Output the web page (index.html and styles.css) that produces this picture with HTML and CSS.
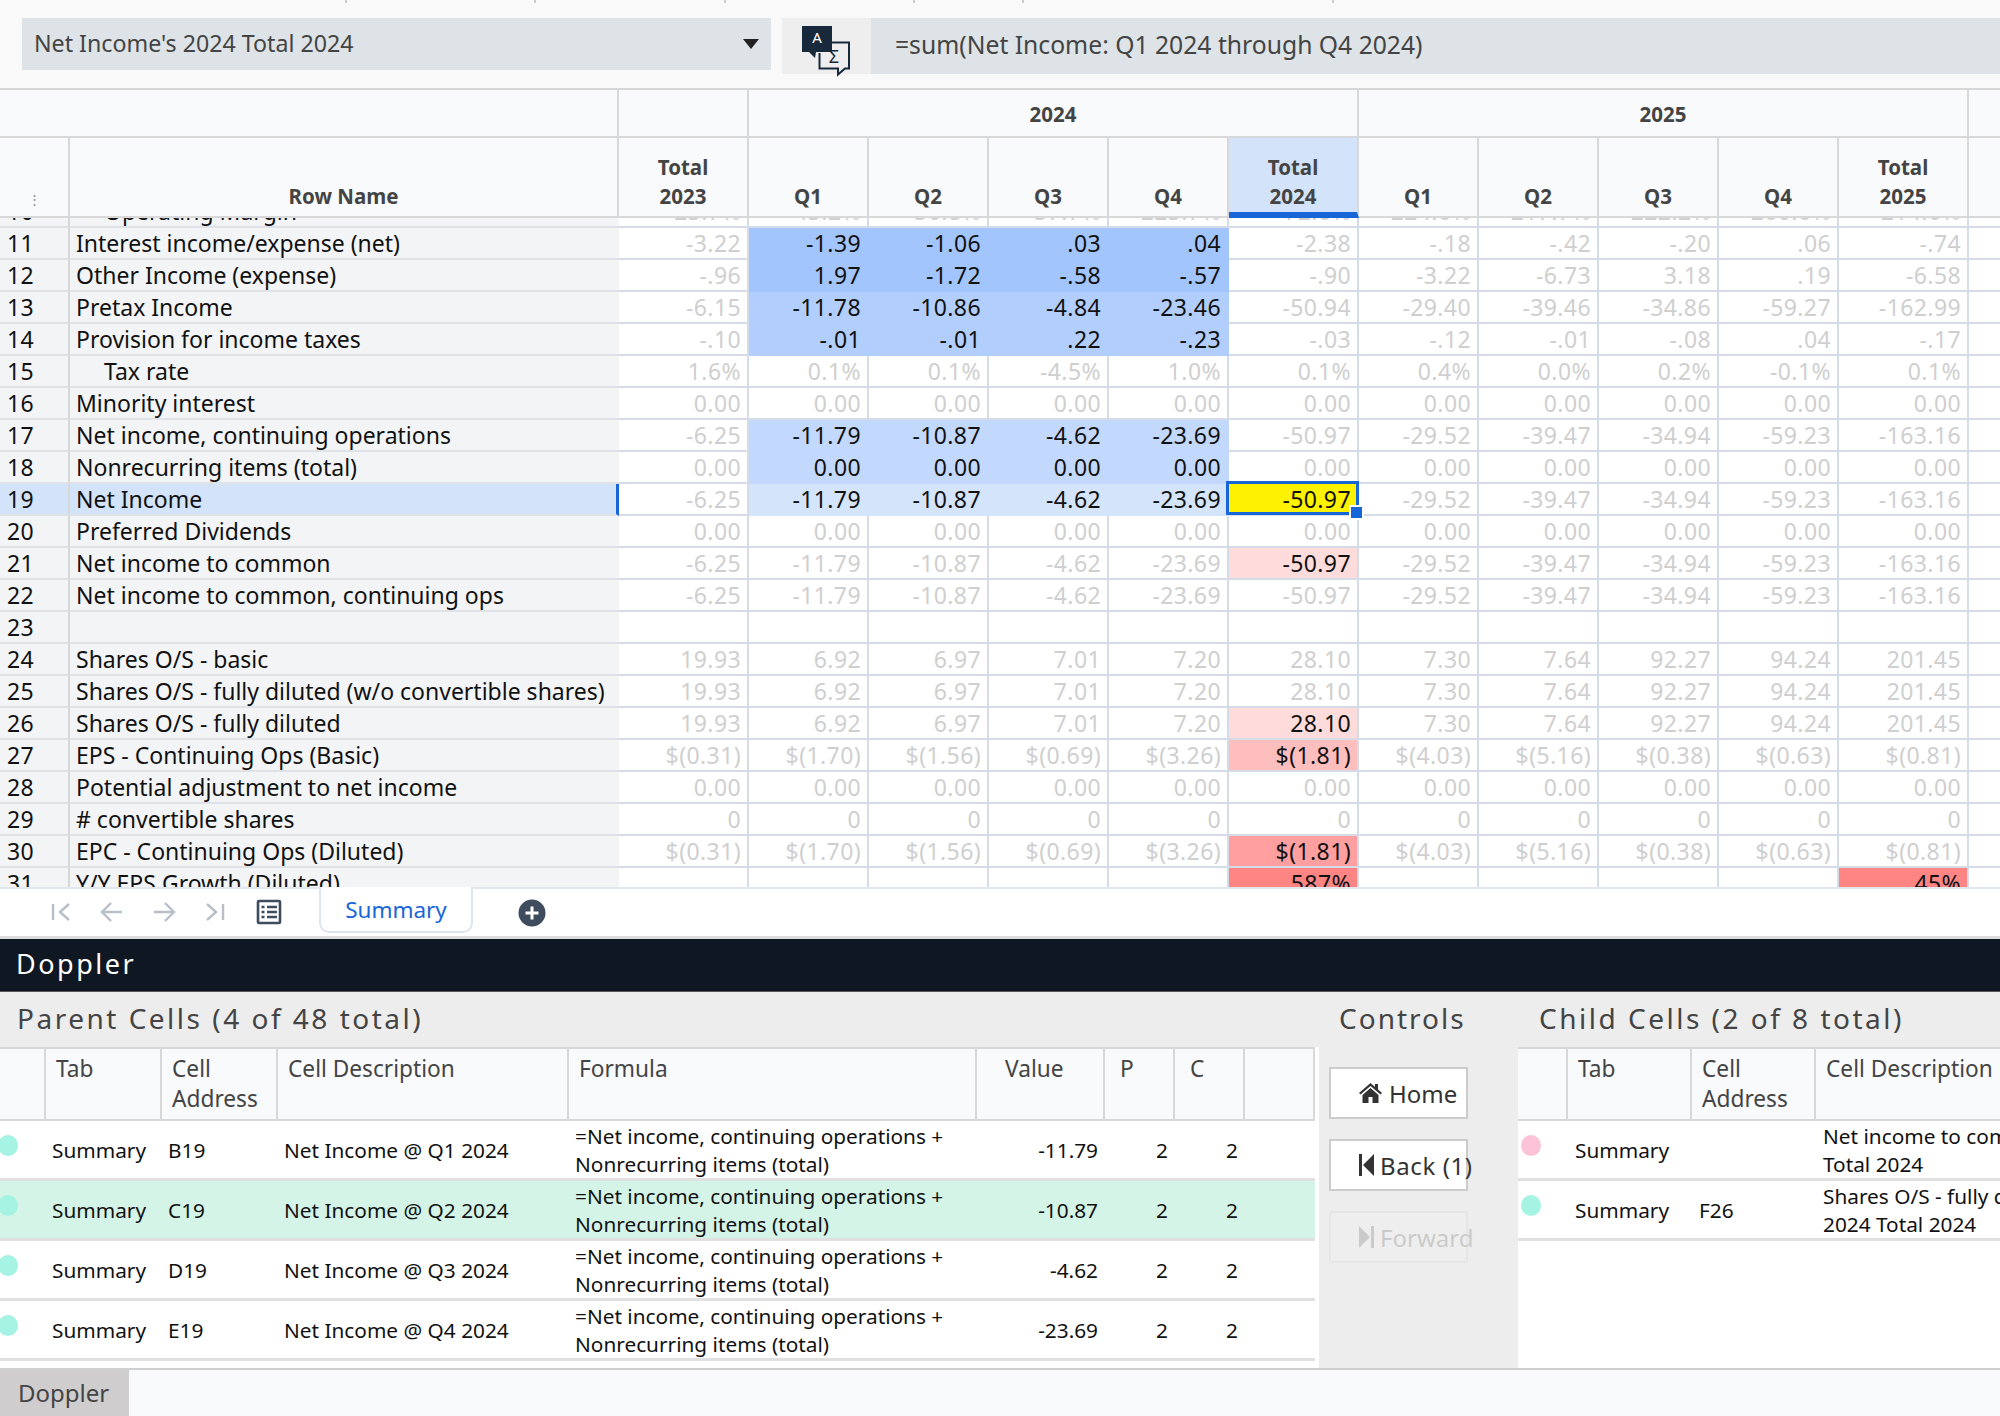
FILE: index.html
```html
<!DOCTYPE html>
<html>
<head>
    <title>Doppler</title>
    <link rel="stylesheet" href="styles.css">
</head>
<body>
    <div class="ruler"><span></span><span></span><span></span><span></span><span></span><span></span><span></span></div>

    <div class="toolbar">
        <div class="cell-select">Net Income's 2024 Total 2024<i class="caret"></i></div>
        <div class="formula-toggle">
            <svg width="52" height="52" viewBox="0 0 52 52">
                <path d="M1 1h30v26H15l-1 6-6-6H1z" fill="#17293a"/>
                <text x="16" y="18" class="icon-a">A</text>
                <path d="M31 17.500h17v26h-4l-7 6v-6H18.500V28" fill="none" stroke="#17293a" stroke-width="2"/>
                <text x="33" y="38" class="icon-sigma">Σ</text>
            </svg>
        </div>
        <div class="formula-bar">=sum(Net Income: Q1 2024 through Q4 2024)</div>
    </div>

    <table class="sheet sheet-head">
        <colgroup><col class="c-num"><col class="c-name"><col class="c-total"><col class="c-q"><col class="c-q"><col class="c-q"><col class="c-q"><col class="c-total"><col class="c-q"><col class="c-q"><col class="c-q"><col class="c-q"><col class="c-total"><col class="c-end"></colgroup>
        <tr class="years">
            <th colspan="2"></th><th></th><th colspan="5">2024</th><th colspan="5">2025</th><th></th>
        </tr>
        <tr class="labels">
            <th><span class="dots">⋮</span></th><th class="center">Row Name</th><th>Total<br>2023</th><th>Q1</th><th>Q2</th><th>Q3</th><th>Q4</th><th class="col-on">Total<br>2024</th><th>Q1</th><th>Q2</th><th>Q3</th><th>Q4</th><th>Total<br>2025</th><th></th>
        </tr>
    </table>

    <div class="sheet-scroll">
        <table class="sheet sheet-body">
            <colgroup><col class="c-num"><col class="c-name"><col class="c-total"><col class="c-q"><col class="c-q"><col class="c-q"><col class="c-q"><col class="c-total"><col class="c-q"><col class="c-q"><col class="c-q"><col class="c-q"><col class="c-total"><col class="c-end"></colgroup>
            <tr><td>10</td><td class="indent">Operating Margin</td><td>23.7%</td><td>43.2%</td><td>36.8%</td><td>37.7%</td><td>223.7%</td><td>72.6%</td><td>224.6%</td><td>217.7%</td><td>222.2%</td><td>260.6%</td><td>214.6%</td><td></td></tr>
            <tr class="p1"><td>11</td><td>Interest income/expense (net)</td><td>-3.22</td><td>-1.39</td><td>-1.06</td><td>.03</td><td>.04</td><td>-2.38</td><td>-.18</td><td>-.42</td><td>-.20</td><td>.06</td><td>-.74</td><td></td></tr>
            <tr class="p1"><td>12</td><td>Other Income (expense)</td><td>-.96</td><td>1.97</td><td>-1.72</td><td>-.58</td><td>-.57</td><td>-.90</td><td>-3.22</td><td>-6.73</td><td>3.18</td><td>.19</td><td>-6.58</td><td></td></tr>
            <tr class="p2"><td>13</td><td>Pretax Income</td><td>-6.15</td><td>-11.78</td><td>-10.86</td><td>-4.84</td><td>-23.46</td><td>-50.94</td><td>-29.40</td><td>-39.46</td><td>-34.86</td><td>-59.27</td><td>-162.99</td><td></td></tr>
            <tr class="p2"><td>14</td><td>Provision for income taxes</td><td>-.10</td><td>-.01</td><td>-.01</td><td>.22</td><td>-.23</td><td>-.03</td><td>-.12</td><td>-.01</td><td>-.08</td><td>.04</td><td>-.17</td><td></td></tr>
            <tr><td>15</td><td class="indent">Tax rate</td><td>1.6%</td><td>0.1%</td><td>0.1%</td><td>-4.5%</td><td>1.0%</td><td>0.1%</td><td>0.4%</td><td>0.0%</td><td>0.2%</td><td>-0.1%</td><td>0.1%</td><td></td></tr>
            <tr><td>16</td><td>Minority interest</td><td>0.00</td><td>0.00</td><td>0.00</td><td>0.00</td><td>0.00</td><td>0.00</td><td>0.00</td><td>0.00</td><td>0.00</td><td>0.00</td><td>0.00</td><td></td></tr>
            <tr class="p3"><td>17</td><td>Net income, continuing operations</td><td>-6.25</td><td>-11.79</td><td>-10.87</td><td>-4.62</td><td>-23.69</td><td>-50.97</td><td>-29.52</td><td>-39.47</td><td>-34.94</td><td>-59.23</td><td>-163.16</td><td></td></tr>
            <tr class="p3"><td>18</td><td>Nonrecurring items (total)</td><td>0.00</td><td>0.00</td><td>0.00</td><td>0.00</td><td>0.00</td><td>0.00</td><td>0.00</td><td>0.00</td><td>0.00</td><td>0.00</td><td>0.00</td><td></td></tr>
            <tr class="p4 row-on"><td>19</td><td>Net Income</td><td>-6.25</td><td>-11.79</td><td>-10.87</td><td>-4.62</td><td>-23.69</td><td class="cell-on">-50.97<i class="handle"></i></td><td>-29.52</td><td>-39.47</td><td>-34.94</td><td>-59.23</td><td>-163.16</td><td></td></tr>
            <tr><td>20</td><td>Preferred Dividends</td><td>0.00</td><td>0.00</td><td>0.00</td><td>0.00</td><td>0.00</td><td>0.00</td><td>0.00</td><td>0.00</td><td>0.00</td><td>0.00</td><td>0.00</td><td></td></tr>
            <tr><td>21</td><td>Net income to common</td><td>-6.25</td><td>-11.79</td><td>-10.87</td><td>-4.62</td><td>-23.69</td><td class="heat1">-50.97</td><td>-29.52</td><td>-39.47</td><td>-34.94</td><td>-59.23</td><td>-163.16</td><td></td></tr>
            <tr><td>22</td><td>Net income to common, continuing ops</td><td>-6.25</td><td>-11.79</td><td>-10.87</td><td>-4.62</td><td>-23.69</td><td>-50.97</td><td>-29.52</td><td>-39.47</td><td>-34.94</td><td>-59.23</td><td>-163.16</td><td></td></tr>
            <tr><td>23</td><td></td><td></td><td></td><td></td><td></td><td></td><td></td><td></td><td></td><td></td><td></td><td></td><td></td></tr>
            <tr><td>24</td><td>Shares O/S - basic</td><td>19.93</td><td>6.92</td><td>6.97</td><td>7.01</td><td>7.20</td><td>28.10</td><td>7.30</td><td>7.64</td><td>92.27</td><td>94.24</td><td>201.45</td><td></td></tr>
            <tr><td>25</td><td>Shares O/S - fully diluted (w/o convertible shares)</td><td>19.93</td><td>6.92</td><td>6.97</td><td>7.01</td><td>7.20</td><td>28.10</td><td>7.30</td><td>7.64</td><td>92.27</td><td>94.24</td><td>201.45</td><td></td></tr>
            <tr><td>26</td><td>Shares O/S - fully diluted</td><td>19.93</td><td>6.92</td><td>6.97</td><td>7.01</td><td>7.20</td><td class="heat1">28.10</td><td>7.30</td><td>7.64</td><td>92.27</td><td>94.24</td><td>201.45</td><td></td></tr>
            <tr><td>27</td><td>EPS - Continuing Ops (Basic)</td><td>$(0.31)</td><td>$(1.70)</td><td>$(1.56)</td><td>$(0.69)</td><td>$(3.26)</td><td class="heat2">$(1.81)</td><td>$(4.03)</td><td>$(5.16)</td><td>$(0.38)</td><td>$(0.63)</td><td>$(0.81)</td><td></td></tr>
            <tr><td>28</td><td>Potential adjustment to net income</td><td>0.00</td><td>0.00</td><td>0.00</td><td>0.00</td><td>0.00</td><td>0.00</td><td>0.00</td><td>0.00</td><td>0.00</td><td>0.00</td><td>0.00</td><td></td></tr>
            <tr><td>29</td><td># convertible shares</td><td>0</td><td>0</td><td>0</td><td>0</td><td>0</td><td>0</td><td>0</td><td>0</td><td>0</td><td>0</td><td>0</td><td></td></tr>
            <tr><td>30</td><td>EPC - Continuing Ops (Diluted)</td><td>$(0.31)</td><td>$(1.70)</td><td>$(1.56)</td><td>$(0.69)</td><td>$(3.26)</td><td class="heat3">$(1.81)</td><td>$(4.03)</td><td>$(5.16)</td><td>$(0.38)</td><td>$(0.63)</td><td>$(0.81)</td><td></td></tr>
            <tr><td>31</td><td>Y/Y EPS Growth (Diluted)</td><td></td><td></td><td></td><td></td><td></td><td class="heat4">587%</td><td></td><td></td><td></td><td></td><td class="heat4">45%</td><td></td></tr>
        </table>
    </div>

    <div class="tabbar">
        <div class="tab-nav">
            <svg width="22" height="22" viewBox="0 0 22 22"><path d="M3 3v16M19 3l-9 8 9 8" fill="none" stroke="#b9bfc7" stroke-width="2.4"/></svg>
            <svg width="24" height="22" viewBox="0 0 24 22"><path d="M22 11H3M11 2l-9 9 9 9" fill="none" stroke="#b9bfc7" stroke-width="2.4"/></svg>
            <svg width="24" height="22" viewBox="0 0 24 22"><path d="M2 11h19M13 2l9 9-9 9" fill="none" stroke="#b9bfc7" stroke-width="2.4"/></svg>
            <svg width="22" height="22" viewBox="0 0 22 22"><path d="M19 3v16M3 3l9 8-9 8" fill="none" stroke="#b9bfc7" stroke-width="2.4"/></svg>
            <svg class="sheet-list" width="26" height="26" viewBox="0 0 26 26"><rect x="2" y="2" width="22" height="22" rx="1" fill="none" stroke="#3f4c5e" stroke-width="2.6"/><path d="M5.500 8h3M11 8h10M5.500 13h3M11 13h10M5.500 18h3M11 18h10" stroke="#3f4c5e" stroke-width="2.4"/></svg>
        </div>
        <div class="tab">Summary</div>
        <svg class="tab-add" width="28" height="28" viewBox="0 0 28 28"><circle cx="14" cy="14" r="13.500" fill="#3f4c5e"/><path d="M14 7.500v13M7.500 14h13" stroke="#fff" stroke-width="3"/></svg>
    </div>

    <div class="doppler-bar">Doppler</div>

    <div class="doppler">
        <div class="panel parent">
            <h3>Parent Cells (4 of 48 total)</h3>
            <table class="cells">
                <colgroup><col class="w-dot"><col class="w-tab"><col class="w-addr"><col class="w-desc"><col class="w-formula"><col class="w-value"><col class="w-pc"><col class="w-pc"><col class="w-pc"></colgroup>
                <tr><th></th><th>Tab</th><th>Cell Address</th><th>Cell Description</th><th>Formula</th><th class="th-value">Value</th><th class="th-pc">P</th><th class="th-pc">C</th><th></th></tr>
                <tr><td><i class="dot"></i></td><td>Summary</td><td>B19</td><td>Net Income @ Q1 2024</td><td>=Net income, continuing operations +<br>Nonrecurring items (total)</td><td class="num">-11.79</td><td class="num">2</td><td class="num">2</td><td></td></tr>
                <tr class="active"><td><i class="dot"></i></td><td>Summary</td><td>C19</td><td>Net Income @ Q2 2024</td><td>=Net income, continuing operations +<br>Nonrecurring items (total)</td><td class="num">-10.87</td><td class="num">2</td><td class="num">2</td><td></td></tr>
                <tr><td><i class="dot"></i></td><td>Summary</td><td>D19</td><td>Net Income @ Q3 2024</td><td>=Net income, continuing operations +<br>Nonrecurring items (total)</td><td class="num">-4.62</td><td class="num">2</td><td class="num">2</td><td></td></tr>
                <tr><td><i class="dot"></i></td><td>Summary</td><td>E19</td><td>Net Income @ Q4 2024</td><td>=Net income, continuing operations +<br>Nonrecurring items (total)</td><td class="num">-23.69</td><td class="num">2</td><td class="num">2</td><td></td></tr>
            </table>
        </div>

        <div class="controls">
            <h3>Controls</h3>
            <div class="control-stack">
                <button><svg width="23" height="20" viewBox="0 0 23 20"><path d="M11.500 0L0 10l1.500 1.500L11.500 3l10 8.500L23 10l-4-3.500V1h-3v3zM3.500 12v8h6v-6h4v6h6v-8l-8-7z" fill="#333"/></svg>Home</button>
                <button class="back"><svg class="step" width="15" height="22" viewBox="0 0 15 22"><path d="M0 0h3v22H0zM15 0v22L4 11z" fill="#333"/></svg>Back (1)</button>
                <button class="off"><svg class="step" width="15" height="22" viewBox="0 0 15 22"><path d="M15 0h-3v22h3zM0 0v22l11-11z" fill="#333"/></svg>Forward</button>
            </div>
        </div>

        <div class="panel child">
            <h3>Child Cells (2 of 8 total)</h3>
            <table class="cells">
                <colgroup><col class="w-dot2"><col class="w-tab2"><col class="w-addr2"><col class="w-desc2"></colgroup>
                <tr><th></th><th>Tab</th><th>Cell Address</th><th>Cell Description</th></tr>
                <tr><td><i class="dot pink"></i></td><td>Summary</td><td></td><td>Net income to common's<br>Total 2024</td></tr>
                <tr><td><i class="dot"></i></td><td>Summary</td><td>F26</td><td>Shares O/S - fully diluted's<br>2024 Total 2024</td></tr>
            </table>
        </div>
    </div>

    <div class="bottom-tabs"><div class="bottom-tab">Doppler</div></div>
</body>
</html>
```

FILE: styles.css
```css
* {
    box-sizing: border-box;
}

body {
    margin: 0;
    width: 2000px;
    height: 1416px;
    overflow: hidden;
    background: #f9f9f9;
    font-family: "Noto Sans", sans-serif;
    color: #111;
}

/* top strip + formula row */
.ruler {
    display: grid;
    grid-template-columns: 345px 189px 190px 189px 109px 310px 567px 1fr;
    height: 3px;
}

.ruler span + span {
    border-left: 2px solid #ccc;
}

.toolbar {
    display: flex;
    align-items: flex-start;
    height: 87px;
    padding-top: 15px;
    border-bottom: 2px solid #d6d6d6;
}

.cell-select {
    position: relative;
    width: 749px;
    height: 52px;
    margin-left: 22px;
    padding-left: 12px;
    background: #dde3e6;
    font-size: 23.200px;
    line-height: 50px;
    color: #444;
}

.caret {
    position: absolute;
    right: 12px;
    top: 21px;
    border-top: 10px solid #222;
    border-left: 8px solid transparent;
    border-right: 8px solid transparent;
}

.formula-toggle {
    width: 89px;
    height: 56px;
    margin-left: 11px;
    padding: 7px 0 0 19px;
    background: #eee;
}

.icon-a {
    font-size: 15px;
    fill: #fff;
    text-anchor: middle;
}

.icon-sigma {
    font-size: 18px;
    fill: #17293a;
    text-anchor: middle;
}

.formula-bar {
    flex: 1;
    height: 56px;
    padding-left: 24px;
    background: #dde3e6;
    font-size: 24.700px;
    line-height: 54px;
    color: #444;
}

/* sheet */
.sheet {
    table-layout: fixed;
    width: 2000px;
    border-spacing: 0;
    border-collapse: separate;
}

.c-num { width: 70px; }
.c-name { width: 549px; }
.c-total { width: 130px; }
.c-q { width: 120px; }
.c-end { width: 31px; }

.sheet-head {
    background: #f9fafc;
    font-size: 20.500px;
    color: #444;
}

.sheet-head th {
    padding: 0;
    border-right: 2px solid #d8d8d8;
    border-bottom: 2px solid #d8d8d8;
    font-weight: 700;
}

.sheet-head th:last-child {
    border-right: 0;
}

.years th {
    height: 48px;
    padding-top: 2px;
}

.labels th {
    height: 80px;
    padding-bottom: 5px;
    vertical-align: bottom;
    line-height: 29px;
}

.sheet-head .col-on {
    background: #d3e3fa;
    border-bottom: 6px solid #1766d8;
    padding-bottom: 1px;
}

.dots {
    font-size: 13px;
    font-weight: 400;
    color: #888;
    line-height: 24px;
}

.sheet-scroll {
    height: 669px;
    overflow: hidden;
    background: #fff;
}

.sheet-body {
    margin-top: -22px;
    font-size: 23px;
    letter-spacing: 0.4px;
    color: #cfcfcf;
}

.sheet-body td {
    height: 32px;
    padding: 0 6px 1px 0;
    border-right: 2px solid #d5dce8;
    border-bottom: 2px solid #d5dce8;
    text-align: right;
    line-height: 26px;
    white-space: nowrap;
}

.sheet-body td:nth-child(1),
.sheet-body td:nth-child(2) {
    padding-right: 0;
    background: #f3f4f6;
    color: #111;
    text-align: left;
    border-bottom-color: #dfe2e6;
}

.sheet-body td:nth-child(1) {
    padding-left: 7px;
    border-right-color: #d8d8d8;
}

.sheet-body td:nth-child(2) {
    padding-left: 6px;
    letter-spacing: 0;
    border-right: 0;
}

.sheet-body td.indent {
    padding-left: 34px;
}

.sheet-body td:last-child {
    border-right: 0;
}

/* precedent shading on the Q columns */
.p1 td:nth-child(n+4):nth-child(-n+7) { background: #a3c5fd; color: #111; border-color: #a3c5fd; }
.p2 td:nth-child(n+4):nth-child(-n+7) { background: #b2cefc; color: #111; border-color: #b2cefc; }
.p3 td:nth-child(n+4):nth-child(-n+7) { background: #c3d8fd; color: #111; border-color: #c3d8fd; }
.p4 td:nth-child(n+4):nth-child(-n+7) { background: #d4e4fb; color: #111; border-color: #d4e4fb; }

.sheet-body .row-on td:nth-child(1),
.sheet-body .row-on td:nth-child(2) {
    background: #d3e3fa;
}

.sheet-body .row-on td:nth-child(2) {
    border-right: 3px solid #1766d8;
}

.sheet-body td.cell-on {
    position: relative;
    background: #fff200;
    color: #111;
}

.cell-on::after {
    content: "";
    position: absolute;
    top: -3px;
    left: -3px;
    right: -2px;
    bottom: -1px;
    border: 3px solid #1766d8;
}

.handle {
    position: absolute;
    z-index: 1;
    right: -7px;
    bottom: -6px;
    width: 15px;
    height: 15px;
    background: #1766d8;
    border: 2px solid #fff;
}

.sheet-body td.heat1 { background: #ffdcdc; color: #111; }
.sheet-body td.heat2 { background: #ffbebe; color: #111; }
.sheet-body td.heat3 { background: #ff9f9f; color: #111; }
.sheet-body td.heat4 { background: #ff8585; color: #111; }

/* sheet tabs */
.tabbar {
    position: relative;
    display: flex;
    height: 52px;
    background: #fff;
    border-top: 2px solid #e2e7ee;
    border-bottom: 3px solid #ddd;
}

.tab-nav {
    display: flex;
    align-items: center;
    gap: 28px;
    width: 319px;
    height: 48px;
    padding: 0 0 2px 50px;
}

.sheet-list {
    margin-left: 2px;
}

.tab {
    width: 154px;
    height: 46px;
    margin-top: -2px;
    background: #fff;
    border: 2px solid #dfe5ec;
    border-top: 0;
    border-radius: 0 0 10px 10px;
    text-align: center;
    font-size: 22.500px;
    line-height: 46px;
    color: #1766d8;
}

.tab-add {
    margin: 10px 0 0 45px;
}

/* doppler panel */
.doppler-bar {
    height: 53px;
    padding-left: 16px;
    background: #0f1822;
    color: #fff;
    font-size: 27px;
    line-height: 50px;
    letter-spacing: 2.500px;
    border-bottom: 1px solid #555;
}

.doppler {
    display: flex;
    height: 378px;
    background: #ededed;
    border-bottom: 2px solid #cfcfcf;
}

.doppler h3 {
    height: 55px;
    margin: 0;
    padding-left: 17px;
    font-size: 28px;
    font-weight: 400;
    line-height: 52px;
    letter-spacing: 2.500px;
    color: #444;
    white-space: nowrap;
    background: #ededed;
}

.panel {
    background: #fff;
    overflow: hidden;
}

.parent {
    width: 1319px;
}

.controls {
    width: 199px;
}

.doppler .controls h3 {
    padding-left: 20px;
    letter-spacing: 2px;
}

.control-stack {
    display: flex;
    flex-direction: column;
    gap: 20px;
    width: 144px;
    margin: 20px 0 0 10px;
    overflow: hidden;
}

button {
    display: flex;
    align-items: center;
    gap: 7px;
    flex: none;
    width: 139px;
    height: 52px;
    padding: 0 0 0 28px;
    background: #fff;
    border: 2px solid #ccc;
    font-family: "Noto Sans", sans-serif;
    font-size: 24px;
    color: #333;
    white-space: nowrap;
}

button svg {
    flex: none;
}

button .step {
    margin-right: -1px;
}

button.back {
    letter-spacing: 0.6px;
}

button.off {
    opacity: 0.18;
    background: #f3f3f3;
}

.child {
    flex: 1;
}

.doppler .child h3 {
    padding-left: 21px;
}

.cells {
    table-layout: fixed;
    border-spacing: 0;
    border-collapse: separate;
    font-size: 20.800px;
}

.parent .cells { width: 1315px; }
.child .cells { width: 700px; }

.w-dot { width: 46px; }
.w-tab { width: 116px; }
.w-addr { width: 116px; }
.w-desc { width: 291px; }
.w-formula { width: 408px; }
.w-value { width: 128px; }
.w-pc { width: 70px; }

.w-dot2 { width: 50px; }
.w-tab2 { width: 124px; }
.w-addr2 { width: 124px; }
.w-desc2 { width: 402px; }

.cells th {
    height: 74px;
    padding: 5px 10px 0;
    background: #f9fafc;
    border-top: 2px solid #d8d8d8;
    border-right: 2px solid #d8d8d8;
    border-bottom: 2px solid #d8d8d8;
    vertical-align: top;
    text-align: left;
    font-weight: 400;
    font-size: 22.700px;
    line-height: 30px;
    color: #444;
}

.cells th.th-value {
    padding-left: 28px;
}

.cells th.th-pc {
    padding-left: 15px;
}

.cells td {
    height: 60px;
    padding: 1px 6px 0;
    border-bottom: 3px solid #e0e0e0;
    line-height: 28px;
    white-space: nowrap;
}

.child .cells td {
    padding-left: 7px;
}

.cells td:first-child,
.child .cells td:first-child {
    padding: 0;
}

.cells .num {
    padding-right: 7px;
    text-align: right;
}

.cells .active td {
    background: #d4f4e8;
}

.dot {
    display: block;
    width: 20px;
    height: 21px;
    margin: -9px 0 0 -2px;
    border-radius: 50%;
    background: #a5f3e3;
}

.child .dot {
    margin-left: 3px;
}

.dot.pink {
    background: #fcc2d7;
}

/* workbook tabs */
.bottom-tabs {
    height: 46px;
    background: #f9fafc;
}

.bottom-tab {
    width: 129px;
    height: 46px;
    padding-left: 18px;
    background: #cfcdce;
    font-size: 24px;
    line-height: 46px;
    color: #444;
}
```
